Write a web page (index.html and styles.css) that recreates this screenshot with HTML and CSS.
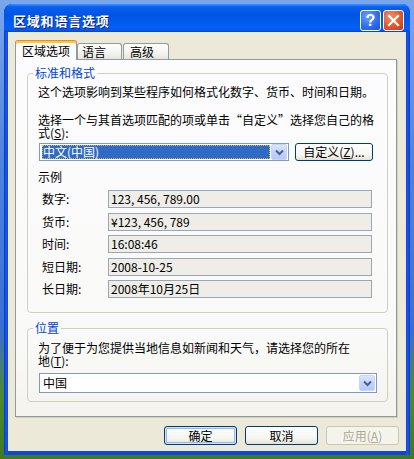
FILE: index.html
```html
<!DOCTYPE html>
<html lang="zh-CN">
<head>
<meta charset="utf-8">
<title>区域和语言选项</title>
<link rel="stylesheet" href="styles.css">
</head>
<body>
<div class="window">
  <div class="titlebar">
    <span class="title">区域和语言选项</span>
    <div class="tbtns">
      <span class="tbtn help">?</span>
      <span class="tbtn close"><svg width="13" height="13" viewBox="0 0 13 13"><path d="M2 2 L11 11 M11 2 L2 11" stroke="#fff" stroke-width="2.2" stroke-linecap="square"/></svg></span>
    </div>
  </div>
  <div class="client">
    <div class="tabs">
      <div class="tab active">区域选项</div>
      <div class="tab tab-lang">语言</div>
      <div class="tab tab-adv">高级</div>
    </div>
    <div class="panel">
      <fieldset class="group g1">
        <legend>标准和格式</legend>
        <p class="p1">这个选项影响到某些程序如何格式化数字、货币、时间和日期。</p>
        <div class="p2">
          <div class="ln">选择一个与其首选项匹配的项或单击“自定义”选择您自己的格</div>
          <div class="ln">式(<u>S</u>):</div>
        </div>
        <div class="combo-row">
          <div class="combo c1">
            <span class="sel">中文(中国)</span>
            <span class="drop"><svg width="9" height="7" viewBox="0 0 9 7"><path d="M1 1.5 L4.5 5 L8 1.5" fill="none" stroke="#4D6185" stroke-width="2"/></svg></span>
          </div>
          <div class="btn btn-custom">自定义(<u>Z</u>)...</div>
        </div>
        <div class="sample-title">示例</div>
        <div class="samples">
          <div class="srow"><span class="lbl">数字:</span><span class="field">123, 456, 789.00</span></div>
          <div class="srow"><span class="lbl">货币:</span><span class="field">¥123, 456, 789</span></div>
          <div class="srow"><span class="lbl">时间:</span><span class="field">16:08:46</span></div>
          <div class="srow"><span class="lbl">短日期:</span><span class="field">2008-10-25</span></div>
          <div class="srow"><span class="lbl">长日期:</span><span class="field">2008年10月25日</span></div>
        </div>
      </fieldset>
      <fieldset class="group g2">
        <legend>位置</legend>
        <div class="p3">
          <div class="ln">为了便于为您提供当地信息如新闻和天气，请选择您的所在</div>
          <div class="ln">地(<u>T</u>):</div>
        </div>
        <div class="combo c2">
          <span class="val">中国</span>
          <span class="drop"><svg width="9" height="7" viewBox="0 0 9 7"><path d="M1 1.5 L4.5 5 L8 1.5" fill="none" stroke="#4D6185" stroke-width="2"/></svg></span>
        </div>
      </fieldset>
    </div>
    <div class="buttons">
      <div class="btn btn-default">确定</div>
      <div class="btn">取消</div>
      <div class="btn disabled">应用(<u>A</u>)</div>
    </div>
  </div>
</div>
</body>
</html>
```

FILE: styles.css
```css
* { box-sizing: border-box; }
html, body { margin: 0; padding: 0; }
body {
  width: 414px;
  height: 459px;
  overflow: hidden;
  padding: 4px 4px 0 4px;
  font-family: "Noto Sans CJK SC", "Liberation Sans", sans-serif;
  font-size: 12px;
  color: #000;
  background: linear-gradient(to bottom, #7aa6ec 0%, #4f84dc 35%, #3a6fd2 72%, #4e8a30 86%, #3f7a22 100%);
}
u { display: inline-block; line-height: 12px; }
.window {
  width: 406px;
  height: 451px;
  display: flex;
  flex-direction: column;
  border-radius: 8px 8px 0 0;
  background: linear-gradient(to right, #0a2fc8 0, #1a5ae6 2px, #0c46dc 4px, #0c46dc 402px, #1a5ae6 404px, #0a2fc8 406px);
  overflow: hidden;
}
.titlebar {
  height: 28px;
  flex: none;
  display: flex;
  align-items: flex-start;
  justify-content: space-between;
  padding: 0 6px 0 9px;
  background: linear-gradient(to bottom, #3d95ff 0%, #0a5fee 10%, #0054e3 40%, #0060f6 85%, #0a5ae8 93%, #0042d0 100%);
  border-radius: 8px 8px 0 0;
}
.title {
  color: #fff;
  font-weight: bold;
  font-size: 13px;
  letter-spacing: 0.8px;
  line-height: 16px;
  margin-top: 9px;
  text-shadow: 1px 1px 0 #0a1d8c;
}
.tbtns { display: flex; gap: 2px; margin-top: 6px; }
.tbtn {
  width: 21px;
  height: 21px;
  border: 1px solid #fff;
  border-radius: 3px;
  display: flex;
  align-items: center;
  justify-content: center;
}
.help {
  background: radial-gradient(circle at 35% 30%, #6fa2ff 0%, #2f6df2 55%, #1c52d8 100%);
  color: #fff;
  font-family: "Liberation Sans", sans-serif;
  font-weight: bold;
  font-size: 16px;
  line-height: 19px;
}
.close {
  background: radial-gradient(circle at 35% 30%, #f0936d 0%, #e0572c 55%, #c43a12 100%);
}
.client {
  flex: 1;
  margin: 0 4px 4px 4px;
  background: #ece9d8;
  padding: 8px 9px 0 7px;
  display: flex;
  flex-direction: column;
}
.tabs {
  display: flex;
  align-items: flex-end;
  height: 19px;
}
.tab {
  height: 16px;
  border: 1px solid #919b9c;
  border-bottom: none;
  border-radius: 3px 3px 0 0;
  background: linear-gradient(to bottom, #ffffff 0%, #f3f3ef 60%, #e6e5de 100%);
  line-height: 15px;
  white-space: nowrap;
}
.tab.active {
  height: 20px;
  margin-bottom: -1px;
  padding: 2px 6px 0 6px;
  background: #fcfcfe;
  border-top: 1px solid #e68b2c;
  box-shadow: inset 0 2px 0 #ffc83c;
  position: relative;
  z-index: 1;
}
.tab-lang { width: 45px; padding-left: 4px; }
.tab-adv { width: 46px; padding-left: 6px; margin-left: 1px; }
.panel {
  width: 382px;
  border: 1px solid #919b9c;
  background: linear-gradient(to bottom, #fcfcfe 0%, #f9f9f7 80%, #f4f3ee 100%);
  box-shadow: 1px 1px 0 #d0cebf;
  padding: 6px 8px 14px 11px;
}
.group {
  margin: 0;
  border: 1px solid #d0d0bf;
  border-radius: 4px;
  padding: 0 8px 0 10px;
  min-width: 0;
}
.group legend {
  color: #0046d5;
  line-height: 14px;
  padding: 0 2px;
  margin-left: -5px;
}
.group p { margin: 0; line-height: 12px; white-space: nowrap; }
.ln { height: 12px; line-height: 12px; white-space: nowrap; }
.ln + .ln { margin-top: 1px; }
.g1 { padding-bottom: 14px; }
.p1 { margin-top: 6px !important; }
.p2 { margin-top: 16px; }
.combo-row { display: flex; gap: 6px; margin-top: 4px; padding-left: 1px; }
.combo {
  height: 18px;
  border: 1px solid #7f9db9;
  background: #fff;
  display: flex;
  align-items: center;
  padding: 1px;
}
.c1 { width: 250px; }
.sel {
  flex: 1;
  height: 14px;
  margin: 0 1px;
  background: #316ac5;
  color: #fff;
  outline: 1px dotted #c9b95a;
  outline-offset: -1px;
  line-height: 14px;
  padding-left: 1px;
}
.drop {
  width: 16px;
  height: 16px;
  flex: none;
  border: 1px solid #c6d6fb;
  border-radius: 2px;
  background: linear-gradient(to bottom, #dbe6fe 0%, #c1d4fb 50%, #b3c8f6 100%);
  display: flex;
  align-items: center;
  justify-content: center;
}
.btn {
  height: 18px;
  border: 1px solid #003c74;
  border-radius: 3px;
  background: linear-gradient(to bottom, #ffffff 0%, #f4f4f0 70%, #e3e1d6 100%);
  display: flex;
  align-items: center;
  justify-content: center;
  line-height: 14px;
  white-space: nowrap;
}
.btn-custom { width: 78px; }
.sample-title { margin-top: 10px; line-height: 12px; }
.samples { display: flex; flex-direction: column; gap: 4.5px; margin-top: 7px; }
.srow { display: flex; align-items: center; padding-left: 4px; }
.lbl { width: 66px; flex: none; line-height: 12px; }
.field {
  width: 264px;
  height: 18px;
  border: 1px solid #9aa5b6;
  background: #eeede7;
  line-height: 16px;
  padding-left: 2px;
}
.g2 { margin-top: 8px; padding-bottom: 8px; }
.p3 { margin-top: 7px; }
.c2 { width: 338px; height: 20px; margin-top: 6px; margin-left: 1px; padding-left: 3px; }
.c2 .val { flex: 1; line-height: 14px; }
.c2 .drop { height: 16px; }
.buttons {
  display: flex;
  justify-content: flex-end;
  gap: 8px;
  margin-top: 9px;
  margin-right: -2px;
}
.buttons .btn { width: 73px; height: 19px; }
.btn-default {
  box-shadow: inset 0 0 0 1px #cee7ff, inset 0 0 0 2px #98b8ea;
}
.btn.disabled {
  border-color: #c9c7ba;
  color: #aca899;
  background: #f5f4ea;
}
```
